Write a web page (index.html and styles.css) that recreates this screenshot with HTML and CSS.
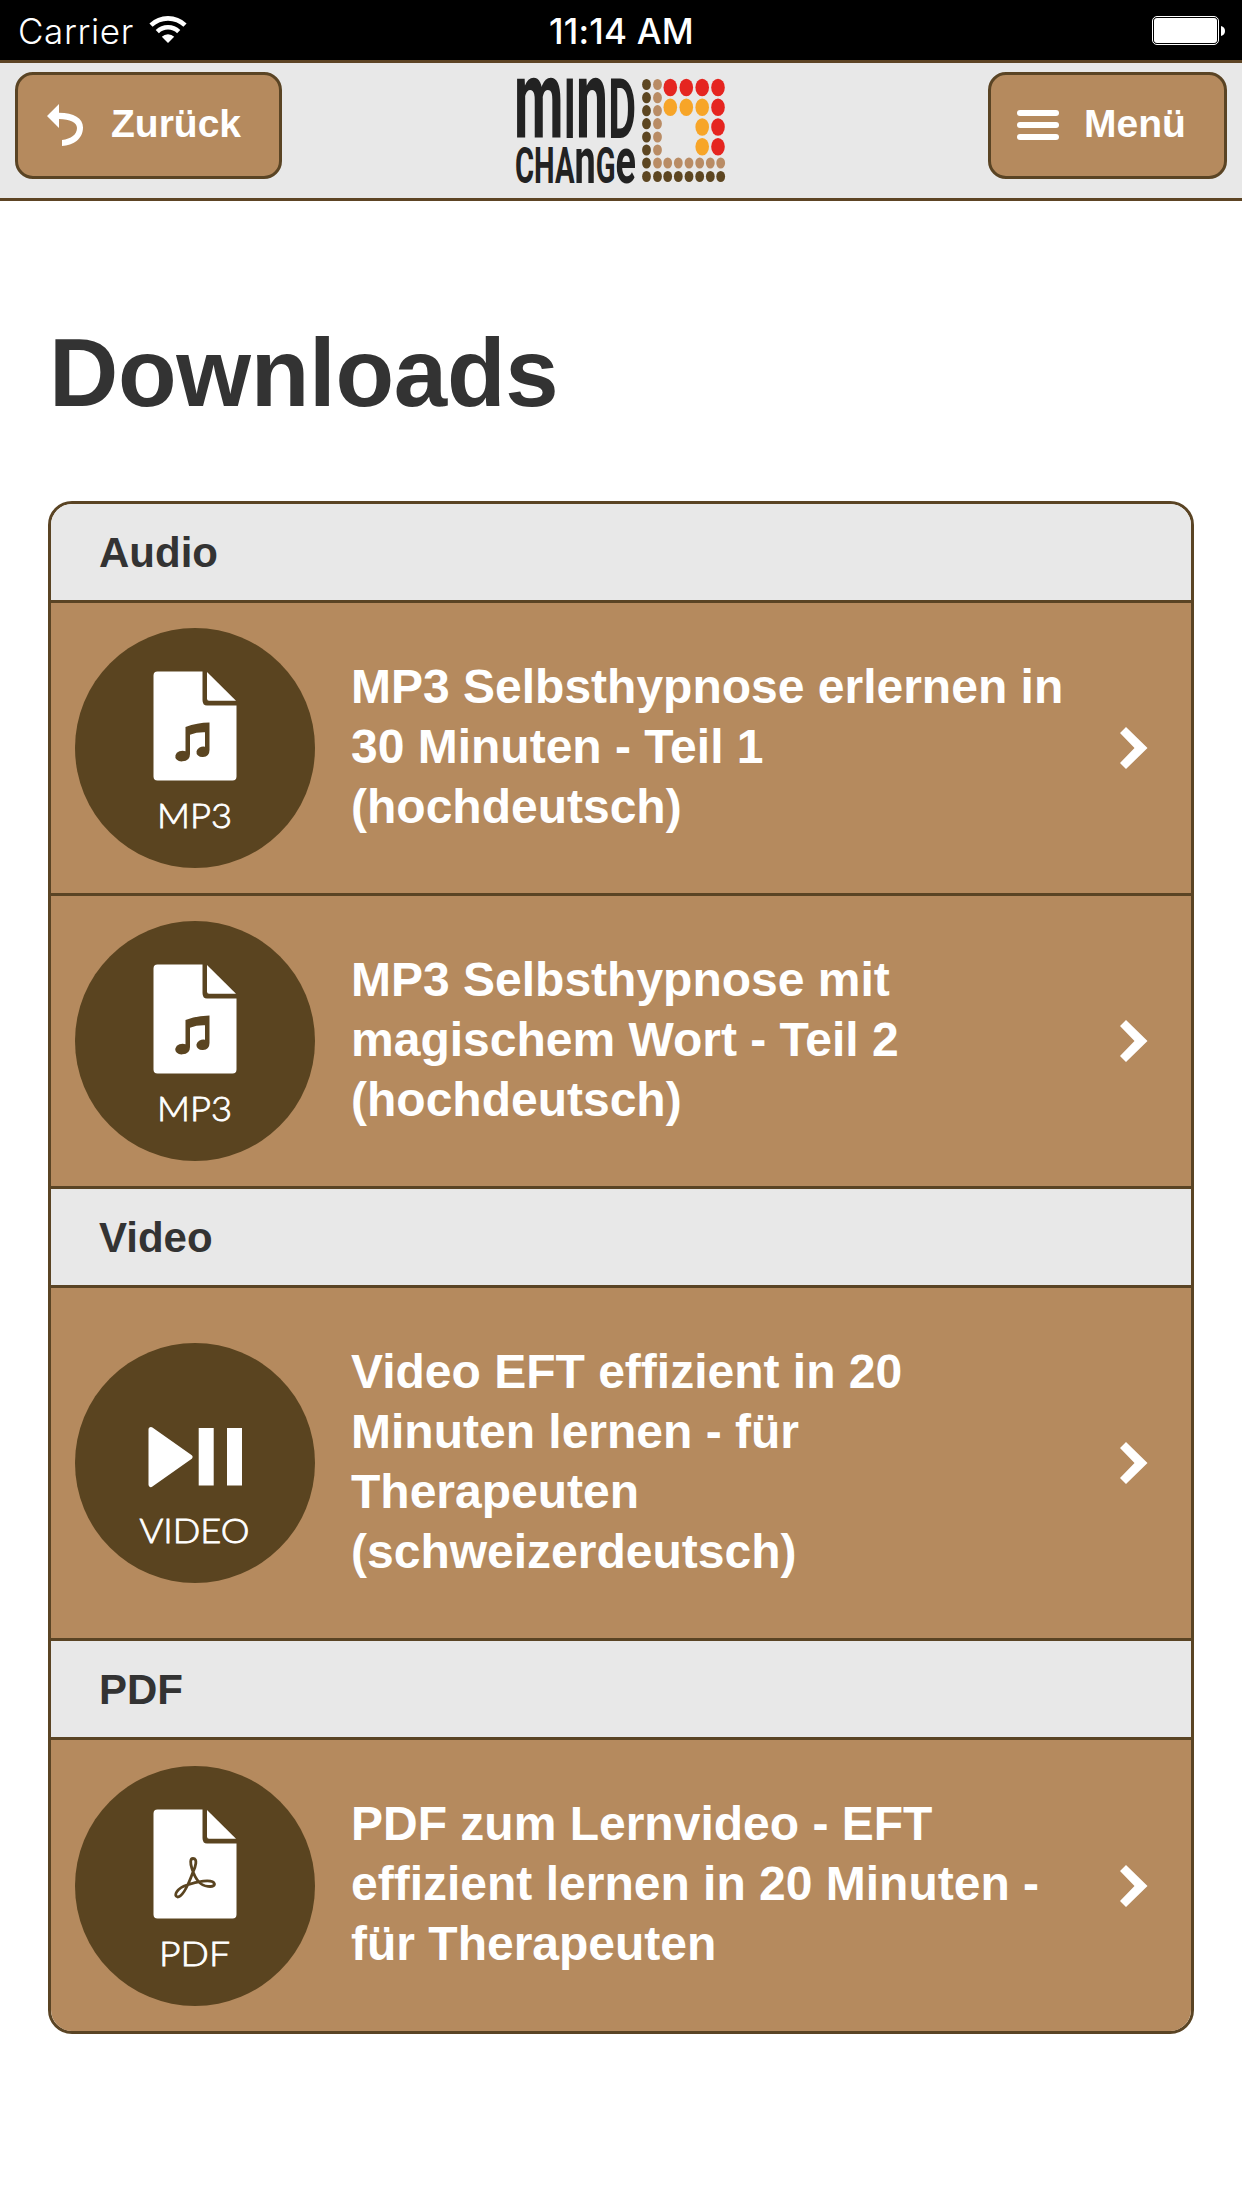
FILE: index.html
```html
<!DOCTYPE html>
<html lang="de">
<head>
  <meta charset="UTF-8" />
  <meta name="viewport" content="width=device-width, initial-scale=1.0"/>
  <title>Downloads</title>
  <link rel="stylesheet" href="styles.css">
</head>
<body>

  <!-- shared icon shapes -->
  <svg class="defs" width="0" height="0">
    <defs>
      <ellipse id="dot" rx="4.4" ry="5.6"/>
      <ellipse id="dot-big" rx="6.8" ry="8.8"/>
      <g id="file">
        <path d="M82.500 43.500H127.500V72Q127.500 77.500 132 77.500H161.500V148.500Q161.500 152.500 157.500 152.500H82.500Q78.500 152.500 78.500 148.500V47.500Q78.500 43.500 82.500 43.500Z"/>
        <path d="M132 44L161 72.700H134Q132 72.700 132 70.500Z"/>
      </g>
    </defs>
  </svg>

  <div class="status-bar">
    <div class="carrier">
      <span>Carrier</span>
      <svg class="wifi" width="38" height="28" viewBox="0 0 38 28">
        <path d="M2 9.200A24.500 24.500 0 0 1 36 9.200" fill="none" stroke="#fff" stroke-width="4.600"/>
        <path d="M8.300 15.600A15.500 15.500 0 0 1 29.700 15.600" fill="none" stroke="#fff" stroke-width="4.600"/>
        <path d="M19 27L12.800 20.800A8.800 8.800 0 0 1 25.200 20.800Z" fill="#fff"/>
      </svg>
    </div>
    <div class="time">11:14 AM</div>
    <svg class="battery" width="74" height="29" viewBox="0 0 74 29">
      <rect x="0.500" y="0.500" width="66" height="28" rx="4.500" fill="none" stroke="#fff"/>
      <rect x="2" y="2" width="63" height="25" rx="3" fill="#fff"/>
      <path d="M69 10Q73 11 73 15Q73 19 69 20Z" fill="#fff"/>
    </svg>
  </div>

  <header class="header">
    <div class="header-side">
      <a class="btn btn-back" href="#">
        <svg width="36" height="42" viewBox="0 0 36 42">
          <path d="M0 12L12 0V8.700C27 9 36 14 36 23.500C36 35 26 41.500 15 42V36C24 35 30 30.500 30 24C30 18.500 23 15 12 15V24Z" fill="#fff"/>
        </svg>
        <span>Zurück</span>
      </a>
    </div>

    <svg class="logo" width="210" height="105" viewBox="0 0 210 105">
      <g class="logo-text">
        <text transform="translate(-2 60) scale(1 2)" font-size="42" textLength="122" lengthAdjust="spacingAndGlyphs"><tspan font-size="56">m</tspan>I<tspan font-size="56">n</tspan>D</text>
        <text transform="translate(-1 105) scale(1 1.760)" font-size="28.500" textLength="121" lengthAdjust="spacingAndGlyphs">CHA<tspan font-size="37">n</tspan>G<tspan font-size="37">e</tspan></text>
      </g>
      <g fill="#5d4621">
        <use href="#dot" x="130.500" y="6.500"/><use href="#dot" x="130.500" y="19.700"/><use href="#dot" x="130.500" y="32.700"/><use href="#dot" x="130.500" y="45.700"/>
        <use href="#dot" x="130.500" y="59"/><use href="#dot" x="130.500" y="72"/><use href="#dot" x="130.500" y="85"/><use href="#dot" x="130.500" y="98.500"/>
        <use href="#dot" x="141.500" y="98.500"/><use href="#dot" x="151.700" y="98.500"/><use href="#dot" x="162.300" y="98.500"/><use href="#dot" x="173" y="98.500"/>
        <use href="#dot" x="183.700" y="98.500"/><use href="#dot" x="194.300" y="98.500"/><use href="#dot" x="204.700" y="98.500"/>
      </g>
      <g fill="#b98c65">
        <use href="#dot" x="141.500" y="6.500"/><use href="#dot" x="141.500" y="19.700"/><use href="#dot" x="141.500" y="32.700"/><use href="#dot" x="141.500" y="45.700"/>
        <use href="#dot" x="141.500" y="59"/><use href="#dot" x="141.500" y="72"/><use href="#dot" x="141.500" y="85"/><use href="#dot" x="151.700" y="85"/>
        <use href="#dot" x="162.300" y="85"/><use href="#dot" x="173" y="85"/><use href="#dot" x="183.700" y="85"/><use href="#dot" x="194.300" y="85"/><use href="#dot" x="204.700" y="85"/>
      </g>
      <g fill="#e52520">
        <use href="#dot-big" x="154.300" y="9.500"/><use href="#dot-big" x="170.300" y="9.500"/><use href="#dot-big" x="186.200" y="9.500"/><use href="#dot-big" x="202" y="9.500"/>
        <use href="#dot-big" x="202" y="29.300"/><use href="#dot-big" x="202" y="49"/><use href="#dot-big" x="202" y="68.700"/>
      </g>
      <g fill="#f7a528">
        <use href="#dot-big" x="154.300" y="29.300"/><use href="#dot-big" x="170.300" y="29.300"/><use href="#dot-big" x="186.200" y="29.300"/>
        <use href="#dot-big" x="186.200" y="49"/><use href="#dot-big" x="186.200" y="68.700"/>
      </g>
    </svg>

    <div class="header-side header-right">
      <a class="btn btn-menu" href="#">
        <svg width="42" height="30" viewBox="0 0 42 30">
          <g fill="#fff">
            <rect width="42" height="6" rx="3"/>
            <rect y="12" width="42" height="6" rx="3"/>
            <rect y="24" width="42" height="6" rx="3"/>
          </g>
        </svg>
        <span>Menü</span>
      </a>
    </div>
  </header>

  <main class="content">
    <h1>Downloads</h1>

    <ul class="list">
      <li class="divider">Audio</li>
      <li>
        <a class="item" href="#">
          <svg class="thumb" viewBox="0 0 240 240">
            <circle cx="120" cy="120" r="120"/>
            <use href="#file" fill="#fff"/>
            <path d="M110.500 99Q122 94.500 134.500 94.500V122Q134.500 128.500 128 129A6.500 5.200 -10 1 1 130 118.700V104.300Q122 104 115 106.700V126Q115 133 107.500 133.300A6.800 5.300 -10 1 1 110.500 123.200Z"/>
            <text class="label" x="82" y="199.500" textLength="75" lengthAdjust="spacingAndGlyphs">MP3</text>
          </svg>
          <span class="title">MP3 Selbsthypnose erlernen in 30 Minuten - Teil 1 (hochdeutsch)</span>
          <svg class="arrow" viewBox="0 0 28 42"><path d="M0 6L6 0L27.500 21L6 42L0 36L14.500 21Z"/></svg>
        </a>
      </li>
      <li>
        <a class="item" href="#">
          <svg class="thumb" viewBox="0 0 240 240">
            <circle cx="120" cy="120" r="120"/>
            <use href="#file" fill="#fff"/>
            <path d="M110.500 99Q122 94.500 134.500 94.500V122Q134.500 128.500 128 129A6.500 5.200 -10 1 1 130 118.700V104.300Q122 104 115 106.700V126Q115 133 107.500 133.300A6.800 5.300 -10 1 1 110.500 123.200Z"/>
            <text class="label" x="82" y="199.500" textLength="75" lengthAdjust="spacingAndGlyphs">MP3</text>
          </svg>
          <span class="title">MP3 Selbsthypnose mit magischem Wort - Teil 2 (hochdeutsch)</span>
          <svg class="arrow" viewBox="0 0 28 42"><path d="M0 6L6 0L27.500 21L6 42L0 36L14.500 21Z"/></svg>
        </a>
      </li>
      <li class="divider">Video</li>
      <li>
        <a class="item item-tall" href="#">
          <svg class="thumb" viewBox="0 0 240 240">
            <circle cx="120" cy="120" r="120"/>
            <g fill="#fff">
              <path d="M76 86.500L115 114L76 141.500Z" stroke="#fff" stroke-width="5" stroke-linejoin="round"/>
              <rect x="123.700" y="85" width="15" height="57.500"/>
              <rect x="152" y="85" width="15" height="57.500"/>
            </g>
            <text class="label" x="64.500" y="199.500" textLength="110" lengthAdjust="spacingAndGlyphs">VIDEO</text>
          </svg>
          <span class="title">Video EFT effizient in 20 Minuten lernen - für Therapeuten (schweizerdeutsch)</span>
          <svg class="arrow" viewBox="0 0 28 42"><path d="M0 6L6 0L27.500 21L6 42L0 36L14.500 21Z"/></svg>
        </a>
      </li>
      <li class="divider">PDF</li>
      <li>
        <a class="item item-last" href="#">
          <svg class="thumb" viewBox="0 0 240 240">
            <circle cx="120" cy="120" r="120"/>
            <use href="#file" fill="#fff"/>
            <path d="M118 92.500C123 92.500 120.500 101 118 106C114 117 108 131 102.500 131C98 130 102 122 112 119C120 116 138 112 139.500 118C139 122 128 121 124 116C119 111 112 92.500 118 92.500Z" fill="none" stroke="#5a4420" stroke-width="2.800" stroke-linejoin="round"/>
            <text class="label" x="84" y="199.500" textLength="71" lengthAdjust="spacingAndGlyphs">PDF</text>
          </svg>
          <span class="title">PDF zum Lernvideo - EFT effizient lernen in 20 Minuten - für Therapeuten</span>
          <svg class="arrow" viewBox="0 0 28 42"><path d="M0 6L6 0L27.500 21L6 42L0 36L14.500 21Z"/></svg>
        </a>
      </li>
    </ul>
  </main>

</body>
</html>
```
FILE: styles.css
```css
* {
  box-sizing: border-box;
}

body {
  margin: 0;
  background: #fff;
  font-family: "Liberation Sans", Arial, sans-serif;
  color: #333;
}

a {
  color: #fff;
  text-decoration: none;
}

svg {
  display: block;
}

.defs {
  position: absolute;
}

.status-bar {
  display: grid;
  grid-template-columns: 1fr auto 1fr;
  align-items: center;
  height: 60px;
  padding: 0 16px 0 18px;
  background: #000;
  color: #fff;
  font-family: Inter, sans-serif;
  font-size: 35px;
}

.carrier {
  display: flex;
  align-items: center;
  gap: 15px;
  font-weight: 300;
  letter-spacing: 0.6px;
}

.carrier span,
.time {
  padding-top: 2px;
}

.time {
  margin-left: -1px;
  font-weight: 500;
  letter-spacing: 0.2px;
}

.battery {
  justify-self: end;
}

.header {
  display: flex;
  height: 141px;
  padding: 9px 15px 0;
  background: #e8e8e8;
  border-top: 3px solid #5d4424;
  border-bottom: 3px solid #5d4424;
}

.header-side {
  flex: 1;
  display: flex;
}

.header-right {
  justify-content: flex-end;
}

.btn {
  display: flex;
  align-items: center;
  height: 107px;
  background: #b58a5e;
  border: 3px solid #5a4424;
  border-radius: 18px;
  font-size: 39px;
  font-weight: bold;
}

.btn svg {
  margin-bottom: 2px;
}

.btn span {
  margin-bottom: 4px;
}

.btn-back {
  width: 267px;
  padding-left: 29px;
  gap: 28px;
}

.btn-menu {
  width: 239px;
  padding-left: 26px;
  gap: 25px;
}

.logo {
  flex: none;
  margin-top: 6px;
  overflow: visible;
}

.logo-text {
  fill: #222;
  font-family: Roboto, sans-serif;
  font-weight: 700;
}

.content {
  padding: 0 48px;
}

h1 {
  margin: 0;
  padding: 117px 0 0 1px;
  height: 300px;
  font-size: 96px;
  line-height: 110px;
  letter-spacing: -0.3px;
}

.list {
  margin: 0;
  padding: 0;
  list-style: none;
  border: 3px solid #5a4424;
  border-radius: 24px;
  overflow: hidden;
}

.list li + li {
  border-top: 3px solid #5a4424;
}

.divider {
  height: 96px;
  padding-left: 48px;
  background: #e8e8e8;
  font-size: 42px;
  font-weight: bold;
  line-height: 98px;
}

.list li + .divider {
  height: 99px;
}

.item {
  display: flex;
  align-items: center;
  height: 290px;
  padding: 0 43px 0 24px;
  background: #b58a5e;
}

.item-tall {
  height: 350px;
}

.item-last {
  height: 291px;
}

.thumb {
  flex: none;
  width: 240px;
  height: 240px;
  fill: #5a4420;
}

.label {
  fill: #fff;
  stroke: #fff;
  stroke-width: 0.8px;
  font-family: Lato, sans-serif;
  font-size: 33.500px;
  font-weight: 300;
}

.title {
  width: 725px;
  margin: 0 auto 3px 36px;
  font-size: 48px;
  font-weight: bold;
  line-height: 60px;
}

.arrow {
  flex: none;
  width: 28px;
  height: 42px;
  fill: #fff;
}
```
